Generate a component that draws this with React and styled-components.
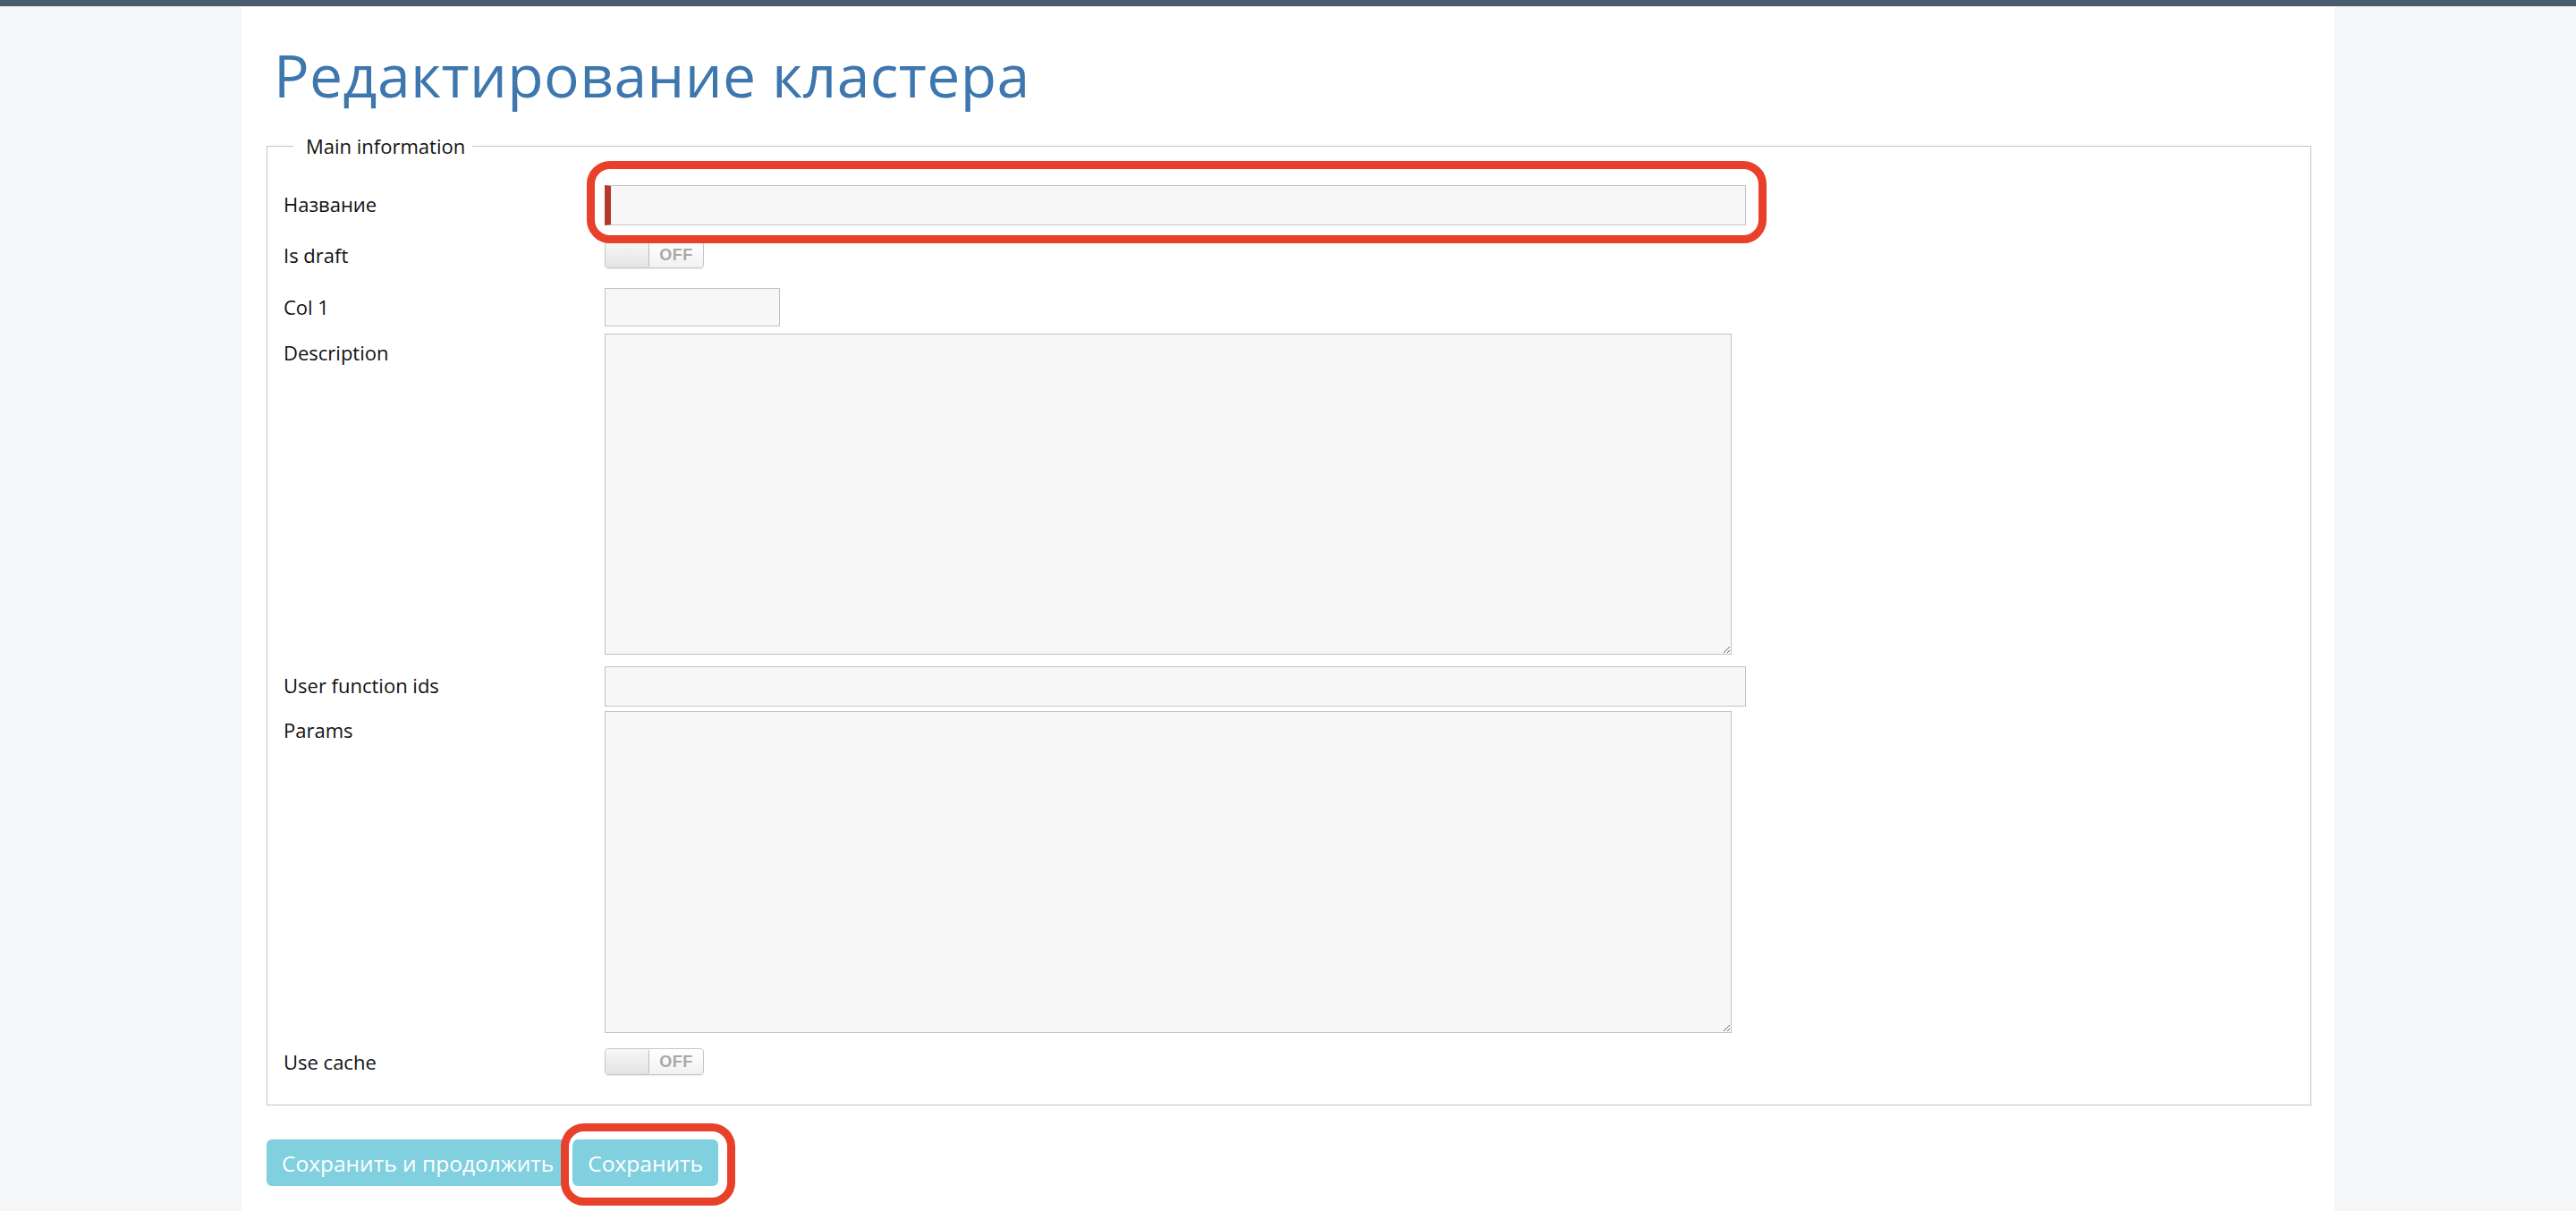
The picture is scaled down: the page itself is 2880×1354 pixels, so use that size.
import React from "react";
import styled, { createGlobalStyle } from "styled-components";

const GlobalStyle = createGlobalStyle`
  html, body {
    margin: 0;
    padding: 0;
    background: #f6f7f9;
    font-family: "Open Sans", "Noto Sans", sans-serif;
    color: #111;
  }
`;

const TopBar = styled.div`
  height: 7px;
  background: #4a5b6e;
`;

const Column = styled.main`
  width: 2340px;
  margin: 0 auto;
  min-height: calc(100vh - 7px);
  box-sizing: border-box;
  background: #ffffff;
  padding: 0 26px 40px 28px;
`;

const Title = styled.h1`
  margin: 0;
  padding: 34px 0 0 8px;
  height: 141px;
  box-sizing: border-box;
  font-size: 66px;
  font-weight: 400;
  line-height: 84px;
  color: #3e77ae;
  letter-spacing: 0.4px;
  white-space: nowrap;
`;

const Fieldset = styled.fieldset`
  margin: 0;
  padding: 29px 18px 27px 18px;
  border: 1px solid #c4c4c4;
  min-inline-size: 0;
`;

const Legend = styled.legend`
  margin-left: 11px;
  padding: 0 8px 0 14px;
  font-size: 22px;
  line-height: 30px;
  color: #111;
`;

const Row = styled.div`
  display: flex;
  align-items: ${(p) => (p.$center ? "center" : "flex-start")};
  margin-top: ${(p) => p.$mt || 0}px;
`;

const Label = styled.label`
  flex: 0 0 359px;
  font-size: 22px;
  line-height: 42px;
  color: #111;
`;

const TextInput = styled.input`
  box-sizing: border-box;
  width: ${(p) => p.$w}px;
  height: ${(p) => p.$h || 45}px;
  margin: 0;
  background: #f7f7f7;
  border: 1px solid #c3c3c3;
  border-left: ${(p) => (p.$required ? "7px solid #b3392b" : "1px solid #c3c3c3")};
  border-radius: 0;
  padding: 0 10px;
  font-family: inherit;
  font-size: 20px;
  outline: none;
`;

const TextArea = styled.textarea`
  box-sizing: border-box;
  width: 1260px;
  height: ${(p) => p.$h}px;
  margin: 0;
  background: #f7f7f7;
  border: 1px solid #c3c3c3;
  border-radius: 0;
  padding: 8px 10px;
  font-family: inherit;
  font-size: 20px;
  outline: none;
  display: block;
`;

const Toggle = styled.div`
  box-sizing: border-box;
  width: 111px;
  height: 30px;
  display: flex;
  border: 1px solid #c6c6c6;
  border-radius: 4px;
  overflow: hidden;
  background: linear-gradient(#ffffff, #f1f1f1);
  box-shadow: 0 1px 1px rgba(0, 0, 0, 0.07);
`;

const Knob = styled.span`
  flex: 0 0 48px;
  background: linear-gradient(#f7f7f7, #e3e3e3);
  border-right: 1px solid #bdbdbd;
  border-radius: 3px;
`;

const ToggleText = styled.span`
  flex: 1;
  display: flex;
  align-items: center;
  justify-content: center;
  font-family: "Liberation Sans", Arial, sans-serif;
  font-weight: 700;
  font-size: 18px;
  color: #a8a8a8;
  letter-spacing: 0.5px;
`;

const Highlight = styled.span`
  position: relative;
  display: inline-flex;

  &::after {
    content: "";
    position: absolute;
    top: ${(p) => -p.$t}px;
    bottom: ${(p) => -p.$b}px;
    left: ${(p) => -p.$l}px;
    right: ${(p) => -p.$r}px;
    border: 9px solid #e8402a;
    border-radius: 26px;
    box-shadow: inset 0 0 0 4px #ffffff;
    pointer-events: none;
  }
`;

const Actions = styled.div`
  display: flex;
  gap: 4px;
  margin-top: 38px;
`;

const Button = styled.button`
  height: 52px;
  padding: 0 17px;
  border: none;
  border-radius: 6px;
  background: #80d0df;
  color: #ffffff;
  font-family: inherit;
  font-size: 24.5px;
  cursor: pointer;
  white-space: nowrap;
`;

function OffSwitch() {
  return (
    <Toggle>
      <Knob />
      <ToggleText>OFF</ToggleText>
    </Toggle>
  );
}

export default function App() {
  return (
    <>
      <GlobalStyle />
      <TopBar />
      <Column>
        <Title>Редактирование кластера</Title>
        <Fieldset>
          <Legend>Main information</Legend>
          <Row $mt={0}>
            <Label>Название</Label>
            <Highlight $t={27} $b={20} $l={20} $r={23}>
              <TextInput $w={1276} $required />
            </Highlight>
          </Row>
          <Row $mt={12} $center>
            <Label>Is draft</Label>
            <OffSwitch />
          </Row>
          <Row $mt={16}>
            <Label>Col 1</Label>
            <TextInput $w={196} $h={43} />
          </Row>
          <Row $mt={8}>
            <Label>Description</Label>
            <TextArea $h={359} />
          </Row>
          <Row $mt={13}>
            <Label>User function ids</Label>
            <TextInput $w={1276} />
          </Row>
          <Row $mt={5}>
            <Label>Params</Label>
            <TextArea $h={360} />
          </Row>
          <Row $mt={11} $center>
            <Label>Use cache</Label>
            <OffSwitch />
          </Row>
        </Fieldset>
        <Actions>
          <Button>Сохранить и продолжить</Button>
          <Highlight $t={18} $b={22} $l={13} $r={19}>
            <Button>Сохранить</Button>
          </Highlight>
        </Actions>
      </Column>
    </>
  );
}
